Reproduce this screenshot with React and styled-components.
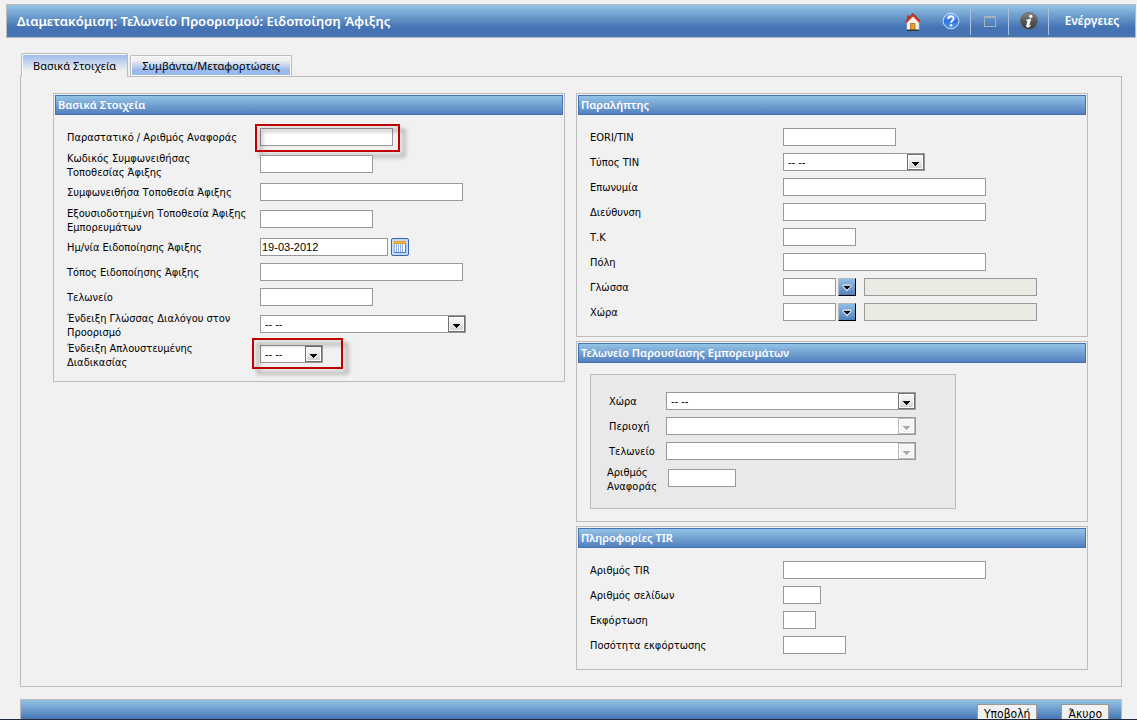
import React from 'react';
import styled, {createGlobalStyle, css} from 'styled-components';

const GlobalStyle = createGlobalStyle`
  * {
    box-sizing: border-box;
  }
  body {
    margin: 0;
    background: #f1f1f1;
    color: #000;
    font-family: 'DejaVu Sans Condensed', 'DejaVu Sans', sans-serif;
    font-size: 11px;
    line-height: 14px;
  }
  button, input, select {
    margin: 0;
    font: inherit;
    color: inherit;
  }
`;

const headingFont = "'Noto Sans', 'Open Sans', sans-serif";

const Page = styled.div`
  height: 100vh;
  padding: 4px 1px 0 6px;
  overflow: hidden;
  border-bottom: 1px solid #1f2b3d;
`;

/* top bar */
const Header = styled.header`
  display: flex;
  align-items: center;
  justify-content: space-between;
  height: 34px;
  padding-left: 10px;
  border: 1px solid #bcbcbc;
  background: linear-gradient(#93c4e6, #4673b3 70%);
  color: #fff;
`;
const Title = styled.h1`
  margin: 0;
  font-family: ${headingFont};
  font-size: 13px;
  line-height: 16px;
  font-weight: 600;
  white-space: nowrap;
`;
const Toolbar = styled.div`
  display: flex;
`;
const Tool = styled.button`
  display: flex;
  align-items: center;
  justify-content: center;
  width: ${(props) => props.$width}px;
  height: 27px;
  padding: 0;
  border: 0;
  border-left: 1px solid ${(props) => (props.$divided ? '#a9c0e0' : 'transparent')};
  background: none;
  font-family: ${headingFont};
  font-size: 12px;
  font-weight: 600;
`;

/* tabs */
const Content = styled.main`
  padding: 15px 14px 0;
`;
const Tabs = styled.div`
  display: flex;
  align-items: flex-end;
  gap: 2px;
  padding-left: 1px;
`;
const Tab = styled.button`
  height: 21px;
  padding: 1px 11px;
  border: 1px solid #bcbcbc;
  border-bottom: 0;
  border-radius: 2px 2px 0 0;
  box-shadow: inset 0 0 0 1px #fafafa;
  background: linear-gradient(#f1f1f1 20%, #9bbaec 70%);
  font-family: ${headingFont};
  white-space: nowrap;
  ${(props) =>
    props.$active &&
    css`
      height: 24px;
      margin-bottom: -1px;
      z-index: 1;
      box-shadow: inset 1px 1px 0 #fafafa;
      background: linear-gradient(#9bbaec, #f1f1f1 75%);
    `}
`;
const Pane = styled.div`
  display: grid;
  grid-template-columns: 1fr 1fr;
  align-items: start;
  gap: 11px;
  padding: 16px 33px 16px 32px;
  border: 1px solid #bcbcbc;
`;
const Column = styled.div`
  display: grid;
  gap: 4px;
`;

/* panels */
const PanelBox = styled.section`
  border: 1px solid #bcbcbc;
`;
const PanelTitle = styled.h2`
  height: 20px;
  margin: 1px 1px 0;
  padding: 2px;
  border: 1px solid #4472b4;
  background: linear-gradient(#93c4e6, #527fbd);
  color: #fff;
  font-family: ${headingFont};
  font-size: 11px;
  line-height: 14px;
  font-weight: 600;
`;
const PanelBody = styled.div`
  padding: 9px 13px 12px;
`;
const Inset = styled.div`
  width: 366px;
  max-width: 100%;
  margin-top: 2px;
  padding: 13px 16px 15px;
  border: 1px solid #bcbcbc;
  background: #e9e9e9;
`;
const Indent = styled.div`
  padding-left: 2px;
`;

/* form rows */
const Row = styled.div`
  display: grid;
  grid-template-columns: ${(props) => props.$labelWidth || 193}px 1fr;
  align-items: start;
  height: ${(props) => (props.$tall ? 30 : 25)}px;
`;
const Label = styled.label`
  padding-top: ${(props) => (props.$tall ? 3 : 7)}px;
  white-space: pre;
`;
const Controls = styled.div`
  position: relative;
  display: flex;
  padding-top: ${(props) => (props.$tall ? 6 : 4)}px;
`;
const Input = styled.input`
  width: ${(props) => props.$width}px;
  height: 18px;
  padding: 0 1px;
  border: 1px solid #999;
  border-radius: 0;
  background: #fff;
  font-family: 'Liberation Sans', Arial, sans-serif;
  outline: 0;
  &:read-only {
    margin-left: 8px;
    background: #eaeae2;
  }
`;
const SelectBox = styled.div`
  position: relative;
  width: ${(props) => props.$width}px;
  height: 18px;
`;
const NativeSelect = styled.select`
  display: block;
  appearance: none;
  width: 100%;
  height: 18px;
  padding: 1px 20px 0 4px;
  border: 1px solid #999;
  border-radius: 0;
  background: #fff;
  outline: 0;
  &:disabled {
    opacity: 1;
  }
`;
const SelectArrow = styled.span`
  position: absolute;
  top: 1px;
  right: 1px;
  display: flex;
  align-items: center;
  justify-content: center;
  width: 17px;
  height: 16px;
  padding-top: 3px;
  border: 1px solid #707070;
  box-shadow: inset 0 0 0 1px #fff;
  background: linear-gradient(#f2f2f2 30%, #cfcfcf);
  color: #000;
  pointer-events: none;
  ${(props) =>
    props.$disabled &&
    css`
      border-color: #b4b8ba;
      background: #f4f4f4;
      color: #aaa;
    `}
`;
const LookupButton = styled.button`
  display: flex;
  align-items: center;
  justify-content: center;
  width: 18px;
  height: 18px;
  margin-left: 2px;
  padding: 1px 0 0;
  border: 1px solid;
  border-color: #b8b8b8 #000 #000 #b8b8b8;
  background: linear-gradient(#8fc0e4, #527fbd);
`;
const CalendarButton = styled.button`
  width: 18px;
  height: 18px;
  margin-left: 3px;
  padding: 0;
  border: 0;
  background: none;
`;
const Highlight = styled.span`
  position: absolute;
  top: ${(props) => props.$top}px;
  left: ${(props) => props.$left}px;
  width: ${(props) => props.$width}px;
  height: ${(props) => props.$height}px;
  border: 2px solid #c00000;
  filter: drop-shadow(5px 5px 2px rgba(0, 0, 0, 0.4));
  pointer-events: none;
`;

/* bottom bar */
const Footer = styled.footer`
  display: flex;
  justify-content: flex-end;
  gap: 24px;
  height: 30px;
  margin-top: 12px;
  padding: 4px 12px;
  border: 1px solid #bcbcbc;
  background: linear-gradient(#93c4e6, #4673b3 70%);
`;
const FooterButton = styled.button`
  height: 20px;
  padding: 1px 6px;
  border: 1px solid #999;
  background: #f1f1f1;
  font-size: 12px;
`;

const HomeIcon = () => (
  <svg width="16" height="19" viewBox="0 0 16 19">
    <path d="M2 3.500h2.500V8H2z" fill="#c9361d" />
    <path d="M2 9.500 8 4l6 5.500v8.300H2z" fill="#f6f6f6" stroke="#c4c4cc" strokeWidth=".5" />
    <path d="M1 10.200 8 3l7 7.200" fill="none" stroke="#d8401f" strokeWidth="2.200" />
    <path d="M1 8.700 8 1.500l7 7.200" fill="none" stroke="#6e1c10" strokeWidth=".7" />
    <path d="M5.500 11.500H10V18H5.500z" fill="#e9a21d" stroke="#a8680c" strokeWidth=".8" />
    <path d="M2 18.200h12" stroke="#111" />
  </svg>
);

const HelpIcon = () => (
  <svg width="18" height="18" viewBox="0 0 18 18">
    <defs>
      <linearGradient id="help" x2="0" y2="1">
        <stop offset="0" stopColor="#86b8fa" />
        <stop offset=".5" stopColor="#2d72dc" />
        <stop offset="1" stopColor="#55a2f5" />
      </linearGradient>
    </defs>
    <circle cx="9" cy="9" r="7.900" fill="url(#help)" stroke="#c3d8f5" strokeWidth="1" />
    <path d="M6.300 7c0-3.600 5.600-3.500 5.400-.3C11.600 8.600 9.100 8.600 9.100 10.700" fill="none" stroke="#fff" strokeWidth="1.900" />
    <circle cx="9.100" cy="13.200" r="1.200" fill="#fff" />
  </svg>
);

const WindowIcon = () => (
  <svg width="12" height="11" viewBox="0 0 12 11" shapeRendering="crispEdges">
    <path d="M0 0h12v11H0zM1 2v8h10V2z" fill="#a9b1ba" fillRule="evenodd" />
  </svg>
);

const InfoIcon = () => (
  <svg width="18" height="18" viewBox="0 0 18 18">
    <defs>
      <linearGradient id="info" x2="0" y2="1">
        <stop offset="0" stopColor="#8a8a8a" />
        <stop offset=".5" stopColor="#555" />
        <stop offset="1" stopColor="#3c3c3c" />
      </linearGradient>
    </defs>
    <circle cx="9" cy="9" r="8.500" fill="url(#info)" stroke="#666" strokeWidth=".8" />
    <circle cx="10.800" cy="4.300" r="1.600" fill="#fff" />
    <path d="M6.200 8.200 10.800 6.900 8.800 13.400c-.2.900.6.800 1.800-.4-.9 2.400-4.600 3.400-4 .5l1.300-4.600z" fill="#fff" stroke="#fff" strokeWidth=".7" />
  </svg>
);

const CalendarIcon = () => (
  <svg width="18" height="18" viewBox="0 0 18 18">
    <rect x=".5" y=".5" width="17" height="17" rx="1.500" fill="#c5daf6" stroke="#3465b8" />
    <path d="M3 5h12v10H3z" fill="#fff" />
    <path d="M3 3h12v3H3z" fill="#e9a224" />
    <path d="M4 4.500h10" stroke="#f0b040" />
    <path d="M3.500 6v9M5.500 6v9M7.500 6v9M9.500 6v9M11.500 6v9" stroke="#8fafe2" />
    <path d="M14.500 6v9M3 14.500h12" stroke="#4a76c4" />
  </svg>
);

const ArrowIcon = () => (
  <svg width="7" height="4" viewBox="0 0 7 4" shapeRendering="crispEdges">
    <path d="M0 0h7v1H6v1H5v1H4v1H3V3H2V2H1V1H0z" fill="currentColor" />
  </svg>
);

const LookupIcon = () => (
  <svg width="10" height="8" viewBox="0 0 10 8">
    <path d="M1 0h8l1 2-5 6-5-6z" fill="#b9cbe0" />
    <path d="M2 2h6v1H7v1H6v1H4V4H3V3H2z" fill="#000" />
  </svg>
);

const Select = ({id, width, empty}) => (
  <SelectBox $width={width}>
    <NativeSelect id={id} disabled={empty}>
      <option>{empty ? '' : '-- --'}</option>
    </NativeSelect>
    <SelectArrow $disabled={empty}>
      <ArrowIcon />
    </SelectArrow>
  </SelectBox>
);

const Field = ({id, label, labelWidth, children}) => {
  const tall = label.includes('\n');
  return (
    <Row $tall={tall} $labelWidth={labelWidth}>
      <Label htmlFor={id} $tall={tall}>
        {label}
      </Label>
      <Controls $tall={tall}>{children}</Controls>
    </Row>
  );
};

const TextField = ({id, label, width, labelWidth}) => (
  <Field id={id} label={label} labelWidth={labelWidth}>
    <Input id={id} type="text" $width={width} />
  </Field>
);

const LookupField = ({id, label}) => (
  <Field id={id} label={label}>
    <Input id={id} type="text" $width={53} />
    <LookupButton type="button" aria-label={`Αναζήτηση: ${label}`}>
      <LookupIcon />
    </LookupButton>
    <Input type="text" readOnly $width={173} aria-label={`${label} (περιγραφή)`} />
  </Field>
);

const Panel = ({title, children}) => (
  <PanelBox>
    <PanelTitle>{title}</PanelTitle>
    <PanelBody>{children}</PanelBody>
  </PanelBox>
);

const BasicPanel = () => (
  <Panel title="Βασικά Στοιχεία">
    <Field id="reference" label="Παραστατικό / Αριθμός Αναφοράς">
      <Input id="reference" type="text" $width={133} />
      <Highlight $top={0} $left={-5} $width={145} $height={28} />
    </Field>
    <TextField id="placeCode" label={'Κωδικός Συμφωνειθήσας\nΤοποθεσίας Άφιξης'} width={113} />
    <TextField id="place" label="Συμφωνειθήσα Τοποθεσία Άφιξης" width={203} />
    <TextField id="authorised" label={'Εξουσιοδοτημένη Τοποθεσία Άφιξης\nΕμπορευμάτων'} width={113} />
    <Field id="date" label="Ημ/νία Ειδοποίησης Άφιξης">
      <Input id="date" type="text" defaultValue="19-03-2012" $width={128} />
      <CalendarButton type="button" aria-label="Ημερολόγιο">
        <CalendarIcon />
      </CalendarButton>
    </Field>
    <TextField id="notifyPlace" label="Τόπος Ειδοποίησης Άφιξης" width={203} />
    <TextField id="office" label="Τελωνείο" width={113} />
    <Field id="language" label={'Ένδειξη Γλώσσας Διαλόγου στον\nΠροορισμό'}>
      <Select id="language" width={206} />
    </Field>
    <Field id="simplified" label={'Ένδειξη Απλουστευμένης\nΔιαδικασίας'}>
      <Select id="simplified" width={63} />
      <Highlight $top={-1} $left={-8} $width={91} $height={31} />
    </Field>
  </Panel>
);

const TraderPanel = () => (
  <Panel title="Παραλήπτης">
    <TextField id="eori" label="EORI/TIN" width={113} />
    <Field id="tinType" label="Τύπος TIN">
      <Select id="tinType" width={142} />
    </Field>
    <TextField id="name" label="Επωνυμία" width={203} />
    <TextField id="address" label="Διεύθυνση" width={203} />
    <TextField id="postcode" label="Τ.Κ" width={73} />
    <TextField id="city" label="Πόλη" width={203} />
    <LookupField id="traderLanguage" label="Γλώσσα" />
    <LookupField id="traderCountry" label="Χώρα" />
  </Panel>
);

const OfficePanel = () => (
  <Panel title="Τελωνείο Παρουσίασης Εμπορευμάτων">
    <Inset>
      <Indent>
        <Field id="country" label="Χώρα" labelWidth={57}>
          <Select id="country" width={250} />
        </Field>
        <Field id="region" label="Περιοχή" labelWidth={57}>
          <Select id="region" width={250} empty />
        </Field>
        <Field id="customs" label="Τελωνείο" labelWidth={57}>
          <Select id="customs" width={250} empty />
        </Field>
      </Indent>
      <TextField id="officeRef" label={'Αριθμός\nΑναφοράς'} width={68} labelWidth={61} />
    </Inset>
  </Panel>
);

const TirPanel = () => (
  <Panel title="Πληροφορίες TIR">
    <TextField id="tirNumber" label="Αριθμός TIR" width={203} />
    <TextField id="pages" label="Αριθμός σελίδων" width={38} />
    <TextField id="unloading" label="Εκφόρτωση" width={33} />
    <TextField id="quantity" label="Ποσότητα εκφόρτωσης" width={63} />
  </Panel>
);

const App = () => (
  <>
    <GlobalStyle />
    <Page>
      <Header>
        <Title>Διαμετακόμιση: Τελωνείο Προορισμού: Ειδοποίηση Άφιξης</Title>
        <Toolbar>
          <Tool type="button" $width={36} aria-label="Αρχική">
            <HomeIcon />
          </Tool>
          <Tool type="button" $width={40} aria-label="Βοήθεια">
            <HelpIcon />
          </Tool>
          <Tool type="button" $width={38} $divided aria-label="Παράθυρο">
            <WindowIcon />
          </Tool>
          <Tool type="button" $width={40} $divided aria-label="Πληροφορίες">
            <InfoIcon />
          </Tool>
          <Tool type="button" $width={87} $divided>
            Ενέργειες
          </Tool>
        </Toolbar>
      </Header>
      <Content>
        <Tabs role="tablist">
          <Tab type="button" role="tab" aria-selected="true" $active>
            Βασικά Στοιχεία
          </Tab>
          <Tab type="button" role="tab" aria-selected="false">
            Συμβάντα/Μεταφορτώσεις
          </Tab>
        </Tabs>
        <Pane>
          <BasicPanel />
          <Column>
            <TraderPanel />
            <OfficePanel />
            <TirPanel />
          </Column>
        </Pane>
        <Footer>
          <FooterButton type="submit">Υποβολή</FooterButton>
          <FooterButton type="button">Άκυρο</FooterButton>
        </Footer>
      </Content>
    </Page>
  </>
);

export default App;
